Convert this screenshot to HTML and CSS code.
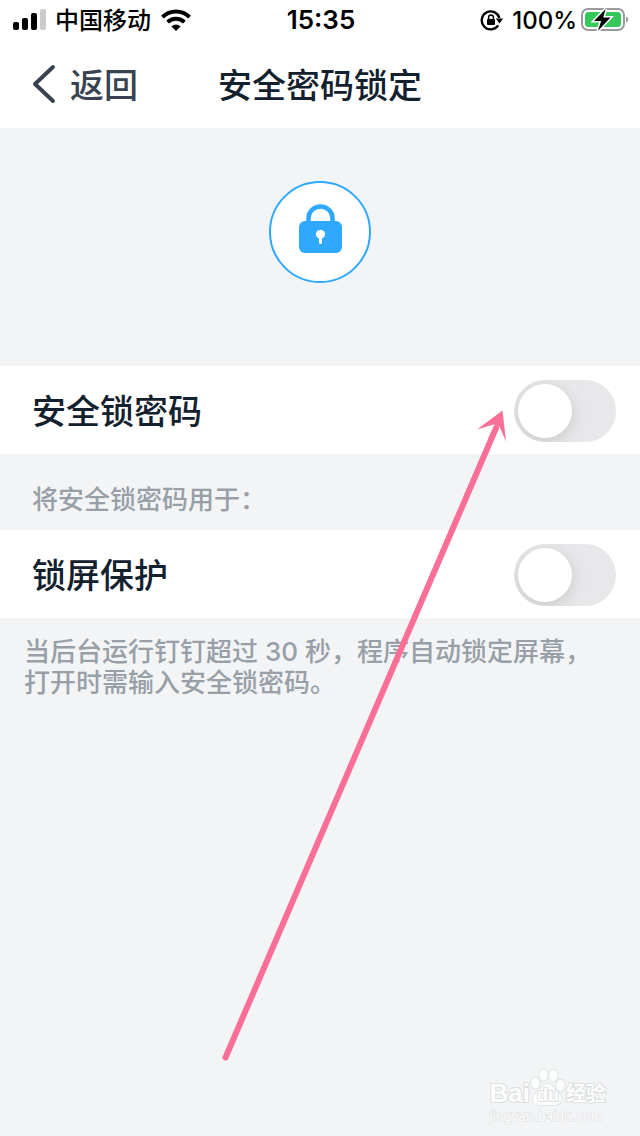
FILE: index.html
```html
<!DOCTYPE html>
<html lang="zh-CN">
<head>
<meta charset="utf-8">
<meta name="viewport" content="width=device-width, initial-scale=1">
<title>安全密码锁定</title>
<link rel="stylesheet" href="styles.css">
</head>
<body>
<div class="screen">
  <header class="top">
    <div class="status">
      <div class="status-left">
        <svg class="signal" width="34" height="22" viewBox="0 0 34 22" aria-hidden="true">
          <rect x="0" y="13" width="6" height="8" rx="2"/>
          <rect x="9" y="9" width="6" height="12" rx="2"/>
          <rect x="18" y="4" width="6" height="17" rx="2"/>
          <rect x="27" y="0" width="6" height="21" rx="2" fill="#cbcbcb"/>
        </svg>
        <span class="carrier">中国移动</span>
        <svg class="wifi" width="30" height="22" viewBox="0 0 30 22" aria-hidden="true">
          <g fill="none" stroke="#000" stroke-width="4">
            <path d="M1.5 8.1a19 19 0 0 1 27 0"/>
            <path d="M6.6 13.2a11.8 11.8 0 0 1 16.8 0"/>
          </g>
          <path d="M15 22l-4.6-4.6a6.6 6.6 0 0 1 9.2 0z"/>
        </svg>
      </div>
      <time class="clock">15:35</time>
      <div class="status-right">
        <svg class="rotation" width="24" height="22" viewBox="0 0 24 22" aria-hidden="true">
          <path d="M18.2 16.4A9 9 0 1 1 19.4 9" fill="none" stroke="#000" stroke-width="2.3"/>
          <path d="M15.8 9.4h7.4l-3.7 5z"/>
          <rect x="7" y="10" width="8" height="6" rx="1"/>
          <path d="M8.600 10.500V8.300a2.400 2.400 0 0 1 4.800 0v2.200" fill="none" stroke="#000" stroke-width="1.500"/>
        </svg>
        <span class="percent">100%</span>
        <svg class="battery" width="48" height="26" viewBox="0 0 48 26" aria-hidden="true">
          <rect x="1" y="2" width="42" height="21" rx="6" fill="#fff" stroke="#9b9b9b" stroke-width="2"/>
          <rect x="4" y="5" width="36" height="15" rx="3.5" fill="#35c759"/>
          <path d="M45 9.500c3 1 3 5 0 6z" fill="#9b9b9b"/>
          <path d="M24.600 2L13 14h7.200l-3.400 10L29.500 10.600h-7.300z" stroke="#fff" stroke-width="3" paint-order="stroke"/>
        </svg>
      </div>
    </div>
    <nav class="nav">
      <button class="back" type="button">
        <svg width="24" height="40" viewBox="0 0 24 40" aria-hidden="true"><path d="M21 3L3 20l18 17" fill="none" stroke="#374350" stroke-width="4" stroke-linecap="round" stroke-linejoin="round"/></svg>
        <span>返回</span>
      </button>
      <h1 class="title">安全密码锁定</h1>
    </nav>
  </header>
  <main>
    <div class="hero">
      <div class="badge">
        <svg width="44" height="50" viewBox="0 0 44 50" aria-hidden="true">
          <path d="M10.5 20V14a12 11.500 0 0 1 24 0V20" fill="none" stroke="#2fa8ff" stroke-width="4.500"/>
          <rect x="1" y="17" width="43" height="32" rx="6" fill="#2fa8ff"/>
          <path d="M21 34.600a4.600 4.600 0 1 1 3 0V38.500a1.500 1.500 0 0 1-3 0z" fill="#fff"/>
        </svg>
      </div>
    </div>
    <label class="row"><span>安全锁密码</span><input class="switch" type="checkbox" role="switch"></label>
    <p class="caption">将安全锁密码用于：</p>
    <label class="row"><span>锁屏保护</span><input class="switch" type="checkbox" role="switch"></label>
    <p class="note">当后台运行钉钉超过 30 秒，程序自动锁定屏幕，<br>打开时需输入安全锁密码。</p>
  </main>
  <svg class="arrow" width="290" height="660" viewBox="0 0 290 660" aria-hidden="true">
    <path d="M8.500 649.500L279 20" stroke="#fa6f97" stroke-width="6" stroke-linecap="round"/>
    <path d="M285.500 2.500L260 21.500L276.500 16.500L282.500 18.500L289 33.500z" fill="#fa6f97"/>
  </svg>
  <footer class="watermark">
    <div class="brand">
      <span class="latin">Bai</span>
      <span class="paw">
        <svg width="36" height="38" viewBox="0 0 36 38" aria-hidden="true">
          <g fill="#fcfdfd" stroke="#dcdee0" stroke-width="1.500">
            <ellipse cx="5.500" cy="15" rx="4.300" ry="5.700"/>
            <ellipse cx="13.500" cy="7" rx="4.300" ry="6"/>
            <ellipse cx="23.500" cy="7.500" rx="4.300" ry="6"/>
            <ellipse cx="30.500" cy="17.500" rx="4.300" ry="5.700"/>
            <path d="M17.500 16c5 0 6 4 9 7s6 5 5 9-4 5-7 5h-14c-4 0-7-1-7.500-5s2-6 5-9 4.500-7 9.500-7z"/>
          </g>
        </svg>
        <span class="du">du</span>
      </span>
      <span class="cn">经验</span>
    </div>
    <div class="site">jingyan.baidu.com</div>
  </footer>
</div>
</body>
</html>
```
FILE: styles.css
```css
* {
  box-sizing: border-box;
}

body {
  margin: 0;
  background: #f2f4f6;
  color: #13202e;
  font-family: Inter, "Noto Sans CJK SC", sans-serif;
}

.screen {
  position: relative;
  min-height: 100vh;
}

.top {
  background: #fff;
}

.status {
  display: grid;
  grid-template-columns: 1fr auto 1fr;
  align-items: center;
  height: 40px;
  padding: 0 11px 0 13px;
  color: #000;
  font-size: 24px;
  font-weight: 500;
  line-height: 38px;
}

.status-left,
.status-right {
  display: flex;
  align-items: center;
}

.status-right {
  justify-content: flex-end;
}

.carrier {
  margin: 0 10px 0 8px;
  padding-top: 2px;
}

.clock {
  font-size: 26px;
  font-weight: 600;
}

.percent {
  margin: 0 4px 0 8px;
  padding-top: 2px;
}

.nav {
  display: grid;
  grid-template-columns: 1fr auto 1fr;
  align-items: center;
  height: 88px;
  padding: 0 32px;
}

.back {
  display: flex;
  align-items: center;
  justify-self: start;
  gap: 14px;
  padding: 0;
  border: 0;
  background: none;
  color: #374350;
  font: inherit;
  font-size: 34px;
  font-weight: 500;
  line-height: 48px;
}

.back span,
.title,
.row span {
  padding-top: 4px;
}

.title {
  margin: 0;
  font-size: 34px;
  font-weight: 500;
  line-height: 48px;
}

.hero {
  display: flex;
  justify-content: center;
  height: 238px;
  padding-top: 53px;
}

.badge {
  display: flex;
  align-items: center;
  justify-content: center;
  width: 102px;
  height: 102px;
  padding-bottom: 6px;
  border: 2px solid #2fa8ff;
  border-radius: 50%;
  background: #fff;
}

.row {
  display: flex;
  align-items: center;
  justify-content: space-between;
  min-height: 88px;
  padding: 0 24px 0 32px;
  background: #fff;
  font-size: 34px;
  font-weight: 500;
  line-height: 48px;
}

.switch {
  display: flex;
  align-items: center;
  appearance: none;
  width: 102px;
  height: 62px;
  margin: 2px 0 0;
  padding: 0 4px;
  overflow: hidden;
  border-radius: 31px;
  background: #e8e8ea;
}

.switch::before {
  content: "";
  width: 54px;
  height: 54px;
  border-radius: 50%;
  background: #fff;
  box-shadow: 0 4px 16px rgba(0, 0, 0, 0.14);
}

.switch:checked {
  justify-content: flex-end;
  background: #2fa8ff;
}

.caption {
  margin: 0;
  padding: 28px 32px 12px;
  color: #989fa6;
  font-size: 26px;
  font-weight: 500;
  line-height: 36px;
}

.note {
  margin: 0;
  padding: 18px 24px;
  color: #989fa6;
  font-size: 26px;
  font-weight: 500;
  line-height: 31px;
}

.arrow {
  position: absolute;
  top: 408px;
  left: 217px;
  pointer-events: none;
}

.watermark {
  position: absolute;
  right: 34px;
  bottom: 12px;
  color: #fcfdfd;
  -webkit-text-stroke: 2px #dddfe1;
  paint-order: stroke fill;
}

.brand {
  display: flex;
  align-items: flex-end;
  height: 38px;
}

.latin {
  font-family: "Liberation Sans", sans-serif;
  font-size: 26px;
  font-weight: 700;
  line-height: 26px;
}

.paw {
  position: relative;
  display: flex;
}

.du {
  position: absolute;
  inset: auto 0 2px;
  font-family: "Liberation Sans", sans-serif;
  font-size: 18px;
  font-weight: 700;
  line-height: 18px;
  text-align: center;
}

.cn {
  font-size: 20px;
  font-weight: 700;
  line-height: 24px;
}

.site {
  font-family: "Liberation Sans", sans-serif;
  font-size: 14px;
  line-height: 16px;
  padding-top: 2px;
  -webkit-text-stroke-width: 1px;
}
```
